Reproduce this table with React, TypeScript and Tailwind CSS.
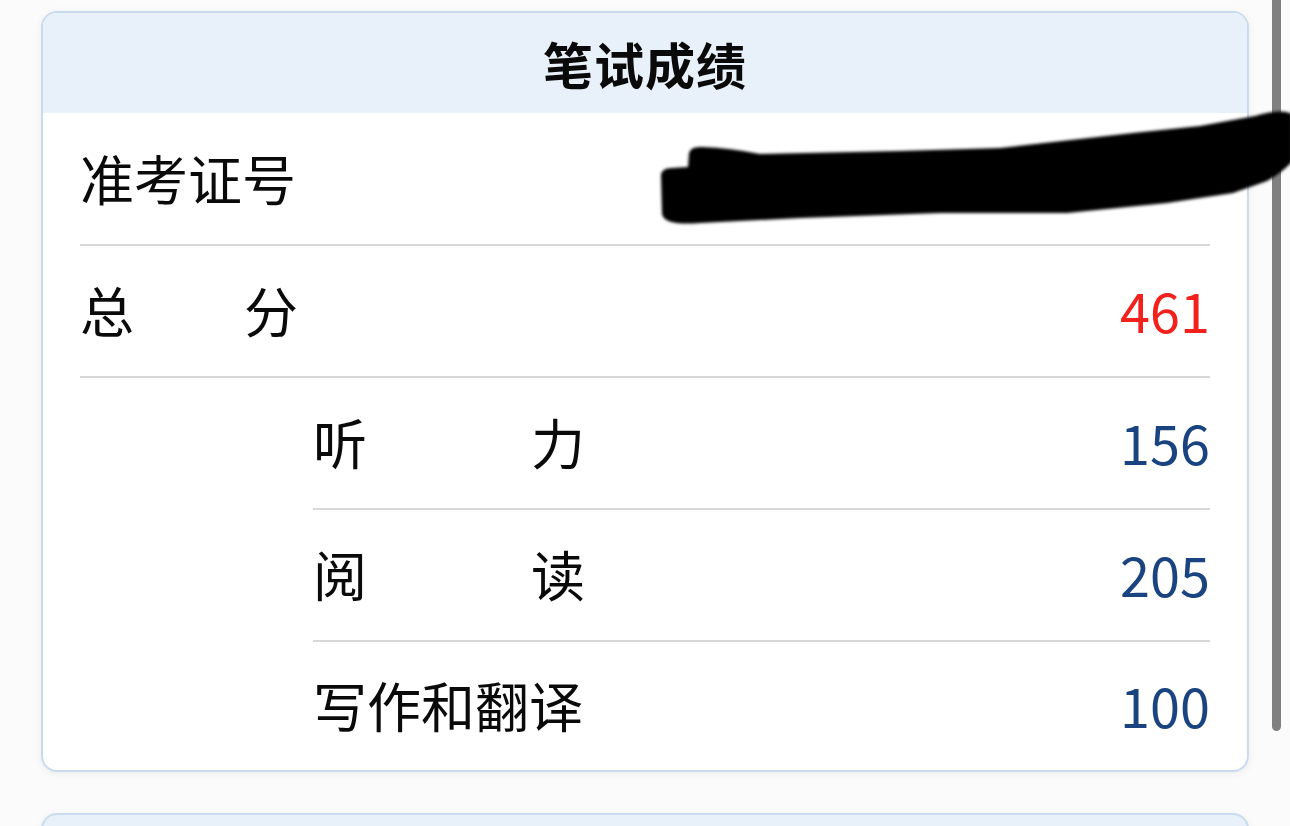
import React from "react";

const font = { fontFamily: '"Noto Sans CJK SC", "Noto Sans", sans-serif' };

function Row({
  children,
  value,
  valueClass,
  indent,
  h,
  last,
}: {
  children: React.ReactNode;
  value?: string;
  valueClass?: string;
  indent?: boolean;
  h: string;
  last?: boolean;
}) {
  return (
    <div
      className={`flex items-center justify-between ${h} ${
        last ? "" : "border-b-2 border-[#d8d8d8]"
      } ${indent ? "ml-[233px]" : ""}`}
    >
      <div className="text-[54px] leading-none text-[#0a0a0a] pb-[2px]">{children}</div>
      {value && <div className={`text-[54px] leading-none pb-[2px] ${valueClass}`}>{value}</div>}
    </div>
  );
}

export default function App() {
  return (
    <div
      className="relative h-[826px] w-[1290px] overflow-hidden bg-[#fbfbfb] pt-[11px] pl-[41px]"
      style={font}
    >
      <div className="w-[1208px] overflow-hidden rounded-[16px] border-2 border-[#c9dbee] bg-white shadow-[0_2px_10px_rgba(0,0,0,0.06)]">
        <div className="flex h-[100px] items-center justify-center bg-[#e8f0f9] text-[50px] font-bold tracking-[1px] text-[#0a0a0a]">
          笔试成绩
        </div>
        <div className="px-[37px]">
          <Row h="h-[133px]">准考证号</Row>
          <Row h="h-[132px]" value="461" valueClass="text-[#f2211c]">
            <div className="flex w-[218px] justify-between">
              <span>总</span>
              <span>分</span>
            </div>
          </Row>
          <Row h="h-[132px]" indent value="156" valueClass="text-[#1a4480]">
            <div className="flex w-[272px] justify-between">
              <span>听</span>
              <span>力</span>
            </div>
          </Row>
          <Row h="h-[132px]" indent value="205" valueClass="text-[#1a4480]">
            <div className="flex w-[272px] justify-between">
              <span>阅</span>
              <span>读</span>
            </div>
          </Row>
          <Row h="h-[128px]" indent last value="100" valueClass="text-[#1a4480]">
            写作和翻译
          </Row>
        </div>
      </div>
      <div className="mt-[41px] h-[120px] w-[1208px] overflow-hidden rounded-[16px] border-2 border-[#c9dbee] bg-[#e8f0f9] shadow-[0_2px_10px_rgba(0,0,0,0.06)]" />

      {/* scrollbar */}
      <div className="absolute left-[1272px] top-0 h-[731px] w-[9px] rounded-b-full bg-[#808080]" />

      {/* redaction scribble */}
      <svg
        className="pointer-events-none absolute left-0 top-0"
        width="1290"
        height="826"
        viewBox="0 0 1290 826"
      >
        <defs>
          <filter id="soft" x="-5%" y="-20%" width="110%" height="140%">
            <feGaussianBlur stdDeviation="1.4" />
          </filter>
        </defs>
        <path
          filter="url(#soft)"
          fill="#000"
          d="M 661 176 Q 661 168 672 168 L 688 167 L 689 153 Q 691 146 702 147 Q 730 148 760 154 L 900 151 L 1000 148 L 1133 133 L 1200 126 L 1255 116 Q 1282 108 1292 114 L 1292 162 Q 1280 174 1267 181 L 1233 193 L 1167 203 L 1067 213 L 940 213 L 800 218 L 700 223 Q 664 226 662 214 Z"
        />
      </svg>
    </div>
  );
}
